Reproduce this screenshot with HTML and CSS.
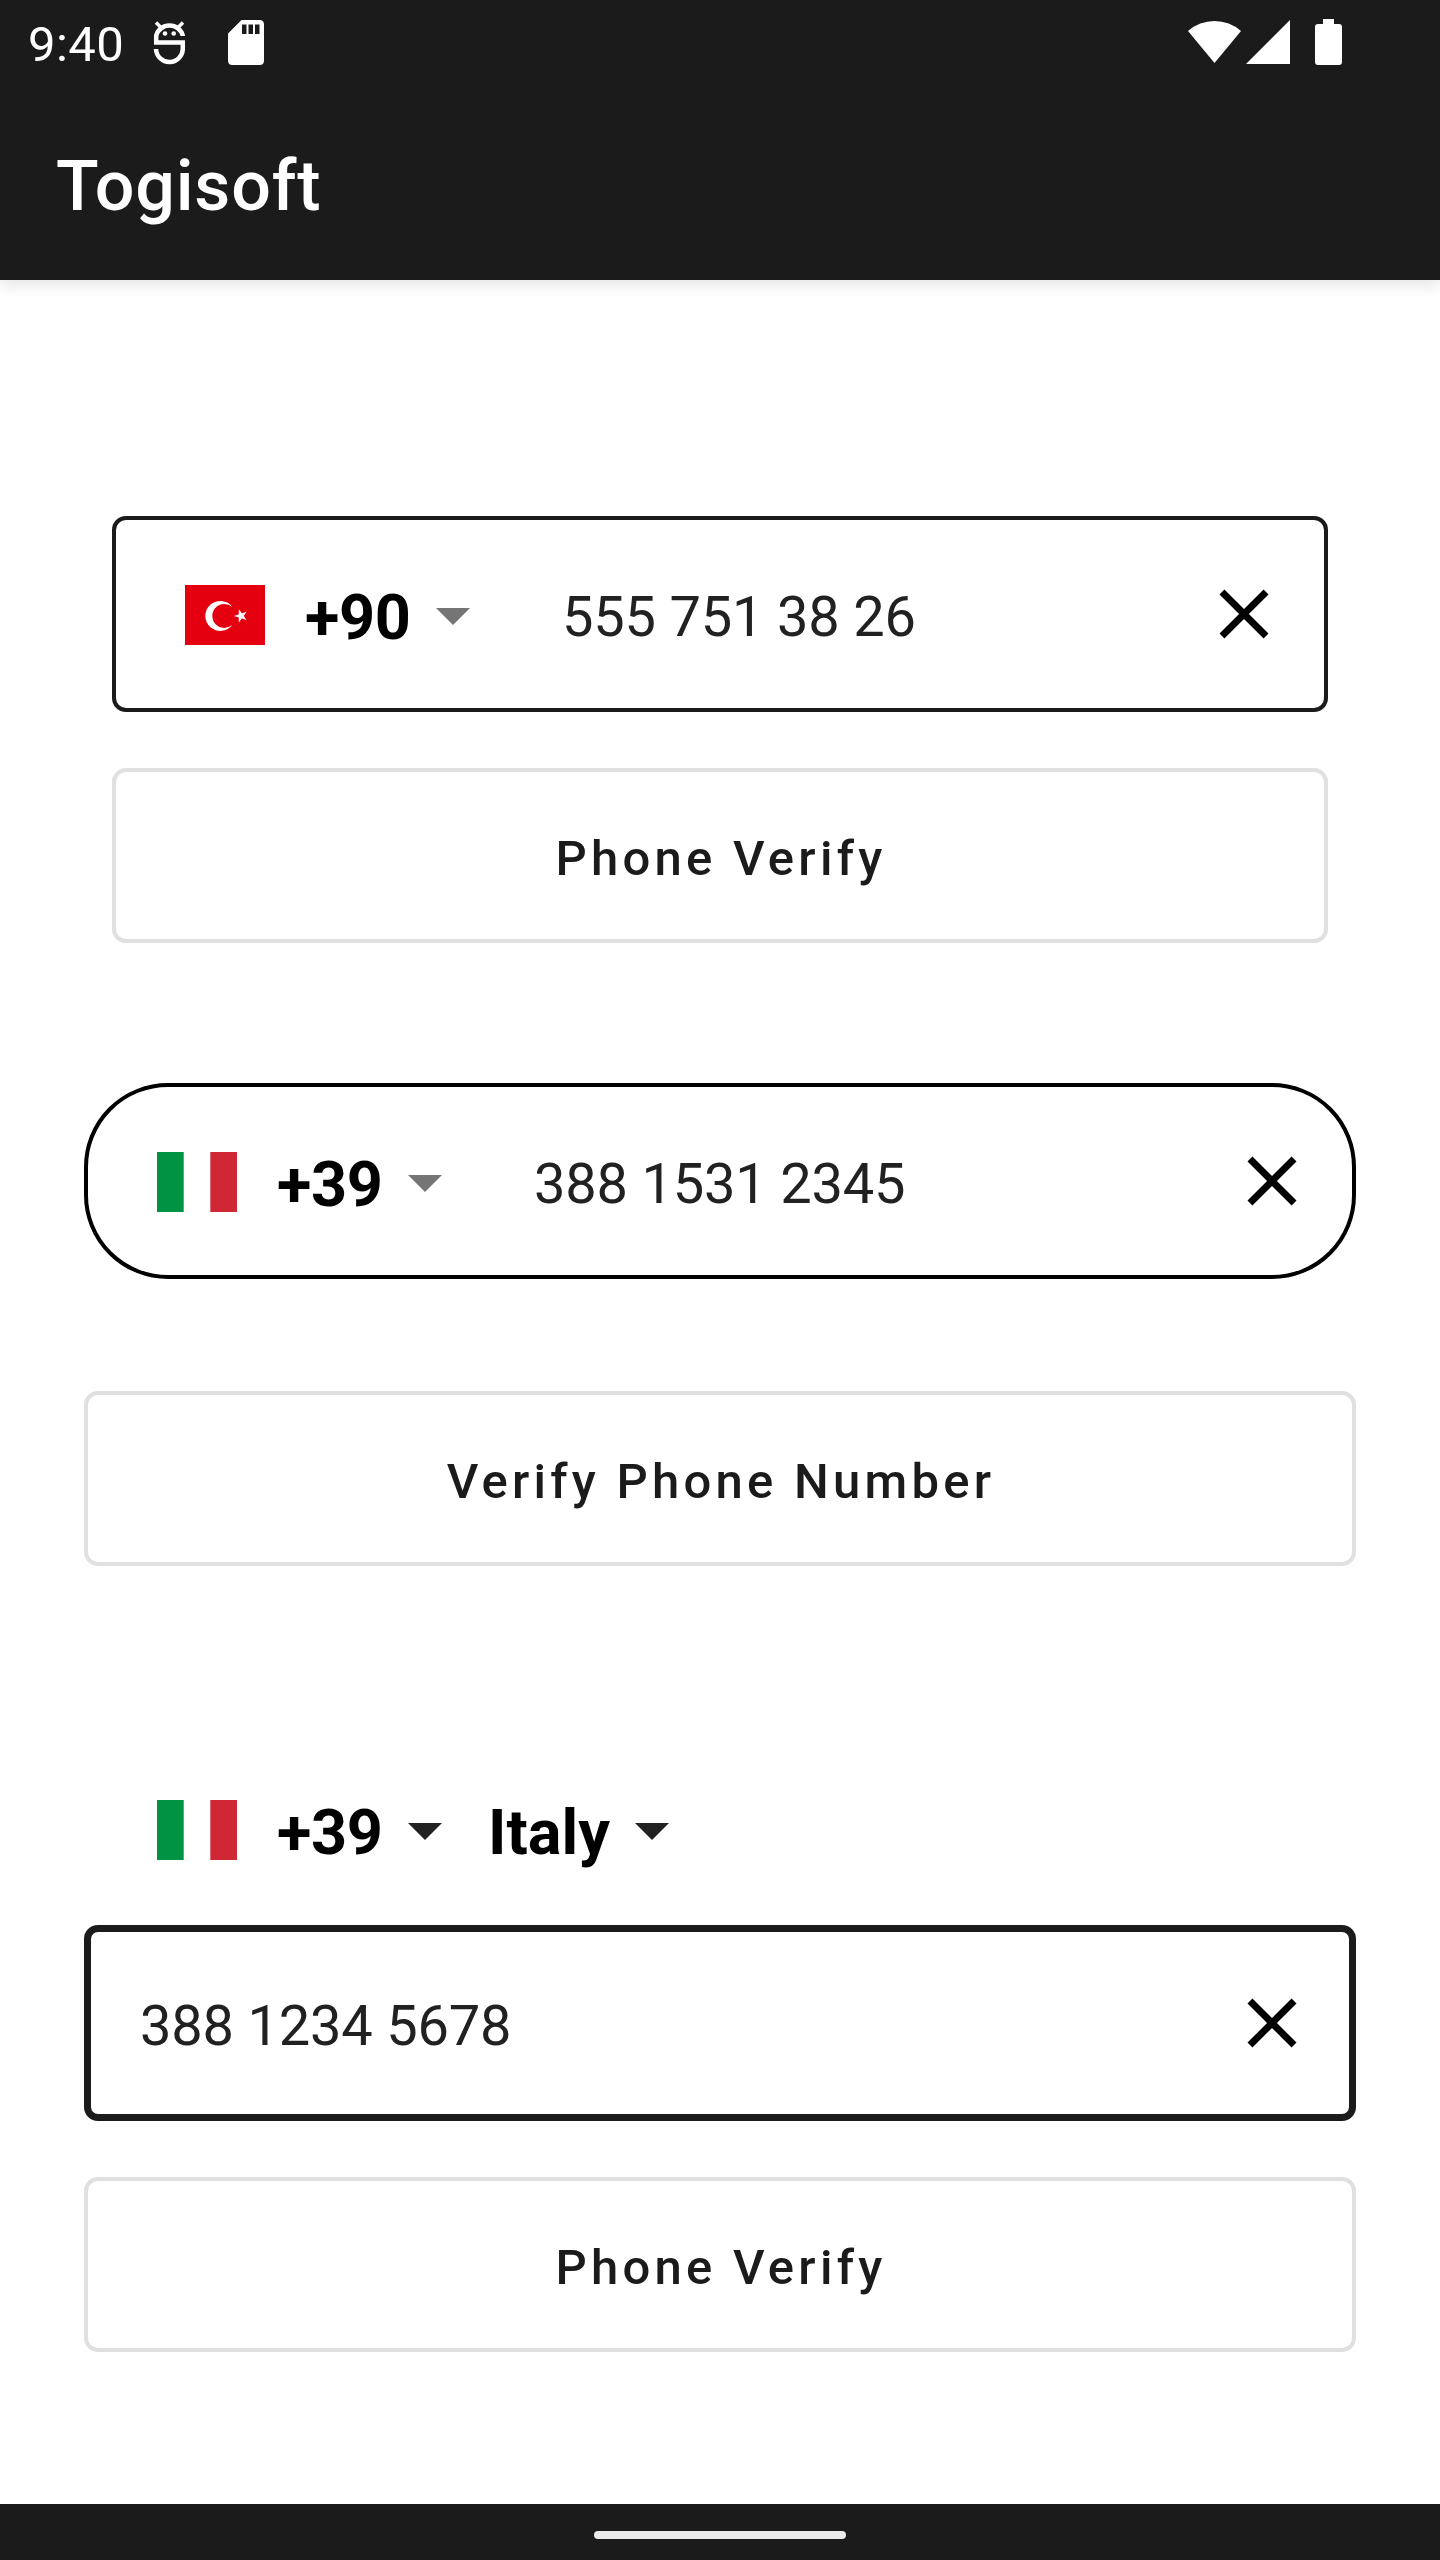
FILE: index.html
```html
<!DOCTYPE html>
<html lang="en">
<head>
<meta charset="utf-8">
<title>Togisoft</title>
<link rel="stylesheet" href="styles.css">
</head>
<body>
<svg class="defs" width="0" height="0" aria-hidden="true">
  <symbol id="close" viewBox="0 0 24 24"><path d="M19 6.41 17.59 5 12 10.59 6.41 5 5 6.41 10.59 12 5 17.59 6.41 19 12 13.41 17.59 19 19 17.59 13.41 12z"/></symbol>
  <symbol id="caret" viewBox="0 0 34 17"><path d="M0 0h34L17 17z"/></symbol>
  <symbol id="italy" viewBox="0 0 80 60"><path fill="#fff" d="M0 0h80v60H0z"/><path fill="#009344" d="M0 0h26.700v60H0z"/><path fill="#cf2734" d="M53.300 0H80v60H53.300z"/></symbol>
  <symbol id="turkey" viewBox="0 0 80 60">
    <path fill="#e4000f" d="M0 0h80v60H0z"/>
    <path fill="#fff" d="M47.400 22A15 15 0 1 0 47.400 39.800A12 12 0 1 1 47.400 22z"/>
    <path fill="#fff" d="M49 30.900 61.700 26.800 53.800 37.600V24.200L61.700 35z"/>
  </symbol>
</svg>
<header class="appbar">
  <div class="status">
    <span class="time">9:40</span>
    <svg class="debug" viewBox="0 0 32 46" fill="none" stroke="#fff" stroke-width="4.500">
      <path d="M29.800 17V16.500A13.700 13 0 0 0 3.200 16.500V23.500H29.800V29A13.400 13.500 0 0 1 3 30"/>
      <path stroke-width="3.500" d="M7.500 8 3 3.500M25.500 8l4.500-4.500"/>
      <g fill="#fff" stroke="none"><circle cx="12" cy="14.500" r="2.300"/><circle cx="20.700" cy="14.500" r="2.300"/></g>
    </svg>
    <svg class="sd" viewBox="0 0 36 45"><path fill="#fff" fill-rule="evenodd" d="M13.500 0H31.500Q36 0 36 4.500V40.500Q36 45 31.500 45H4.500Q0 45 0 40.500V13.500zM14 4.500V14h4.500V4.500zM20.500 4.500V14H25V4.500zM27 4.500V14h4.500V4.500z"/></svg>
    <span class="spacer"></span>
    <svg class="wifi" viewBox="0 0 53 44"><path fill="#fff" d="M26.500 44 0 12A40 40 0 0 1 53 12z"/></svg>
    <svg class="signal" viewBox="0 0 44 44"><path fill="#fff" d="M44 0V44H0z"/></svg>
    <svg class="battery" viewBox="0 0 27 46"><path fill="#fff" d="M8 0H19V5H24Q27 5 27 8V43Q27 46 24 46H3Q0 46 0 43V8Q0 5 3 5H8z"/></svg>
  </div>
  <h1 class="title">Togisoft</h1>
</header>
<main class="content">
  <section class="group inset">
    <div class="field">
      <svg class="flag"><use href="#turkey"/></svg>
      <span class="code">+90</span>
      <svg class="caret muted"><use href="#caret"/></svg>
      <span class="number">555 751 38 26</span>
      <svg class="close"><use href="#close"/></svg>
    </div>
    <button class="button">Phone Verify</button>
  </section>
  <section class="group second">
    <div class="field round">
      <svg class="flag"><use href="#italy"/></svg>
      <span class="code">+39</span>
      <svg class="caret muted"><use href="#caret"/></svg>
      <span class="number">388 1531 2345</span>
      <svg class="close"><use href="#close"/></svg>
    </div>
    <button class="button">Verify Phone Number</button>
  </section>
  <section class="group third">
    <div class="picker">
      <svg class="flag"><use href="#italy"/></svg>
      <span class="code">+39</span>
      <svg class="caret"><use href="#caret"/></svg>
      <span class="country">Italy</span>
      <svg class="caret"><use href="#caret"/></svg>
    </div>
    <div class="field focused">
      <span class="number">388 1234 5678</span>
      <svg class="close"><use href="#close"/></svg>
    </div>
    <button class="button">Phone Verify</button>
  </section>
</main>
<footer class="navbar"><span class="handle"></span></footer>
</body>
</html>
```
FILE: styles.css
```css
* { box-sizing: border-box; }
body {
  margin: 0;
  height: 2560px;
  display: flex;
  flex-direction: column;
  background: #fff;
  font-family: Roboto, sans-serif;
  color: #212121;
}
svg { display: block; flex: none; }
.defs { position: absolute; }

.appbar {
  height: 280px;
  flex: none;
  background: #1b1b1b;
  color: #fff;
  box-shadow: 0 4px 16px rgba(0, 0, 0, .12);
}
.status {
  height: 84px;
  display: flex;
  align-items: flex-start;
  padding: 19px 98px 0 28px;
}
.time { font-size: 49px; line-height: 52px; width: 125px; letter-spacing: .4px; }
.debug { width: 32px; height: 46px; }
.sd { width: 36px; height: 45px; margin: 1px 0 0 43px; }
.spacer { flex: 1; }
.wifi { width: 53px; height: 44px; }
.signal { width: 44px; height: 44px; margin: 1px 25px 0 5px; }
.battery { width: 27px; height: 46px; }
.title {
  margin: 0;
  padding-left: 56px;
  font-size: 70px;
  font-weight: 500;
  line-height: 204px;
  letter-spacing: .8px;
  height: 196px;
}

.content { flex: 1; padding: 236px 84px 0; }
.group { display: flex; flex-direction: column; gap: 56px; }
.inset { padding: 0 28px; }
.second { margin-top: 140px; gap: 112px; }
.third { margin-top: 223px; }

.field {
  height: 196px;
  display: flex;
  align-items: center;
  border: 4px solid #1b1b1b;
  border-radius: 14px;
  padding: 0 38px 0 69px;
}
.round { border-color: #000; border-radius: 84px; }
.focused { border-width: 7px; padding: 0 35px 0 49px; }
.flag { width: 80px; height: 60px; margin-top: 2px; }
.code, .country {
  font-size: 63px;
  font-weight: 700;
  line-height: 74px;
  color: #000;
  margin-top: 7px;
}
.code { width: 129px; margin-left: 40px; letter-spacing: -.4px; }
.country { width: 122px; margin-left: 46px; }
.caret { width: 34px; height: 17px; margin: 5px 0 0 2px; fill: #212121; }
.country + .caret { margin-left: 25px; }
.muted { fill: #757575; }
.number {
  flex: 1;
  font-size: 56px;
  line-height: 66px;
  letter-spacing: -.2px;
  margin-top: 6px;
}
.caret + .number { padding-left: 92px; }
.close { width: 84px; height: 84px; fill: #000; }

.button {
  height: 175px;
  border: 4px solid #e0e0e0;
  border-radius: 14px;
  background: none;
  padding: 6px 0 0 2px;
  font: 500 49px/57px Roboto, sans-serif;
  letter-spacing: 4.25px;
  color: #1b1b1b;
}
.picker { height: 80px; display: flex; align-items: center; padding-left: 73px; }

.navbar {
  height: 56px;
  flex: none;
  background: #1b1b1b;
  display: flex;
  justify-content: center;
  align-items: flex-start;
  padding-top: 27px;
}
.handle { width: 252px; height: 8px; border-radius: 4px; background: #ececec; }
```
